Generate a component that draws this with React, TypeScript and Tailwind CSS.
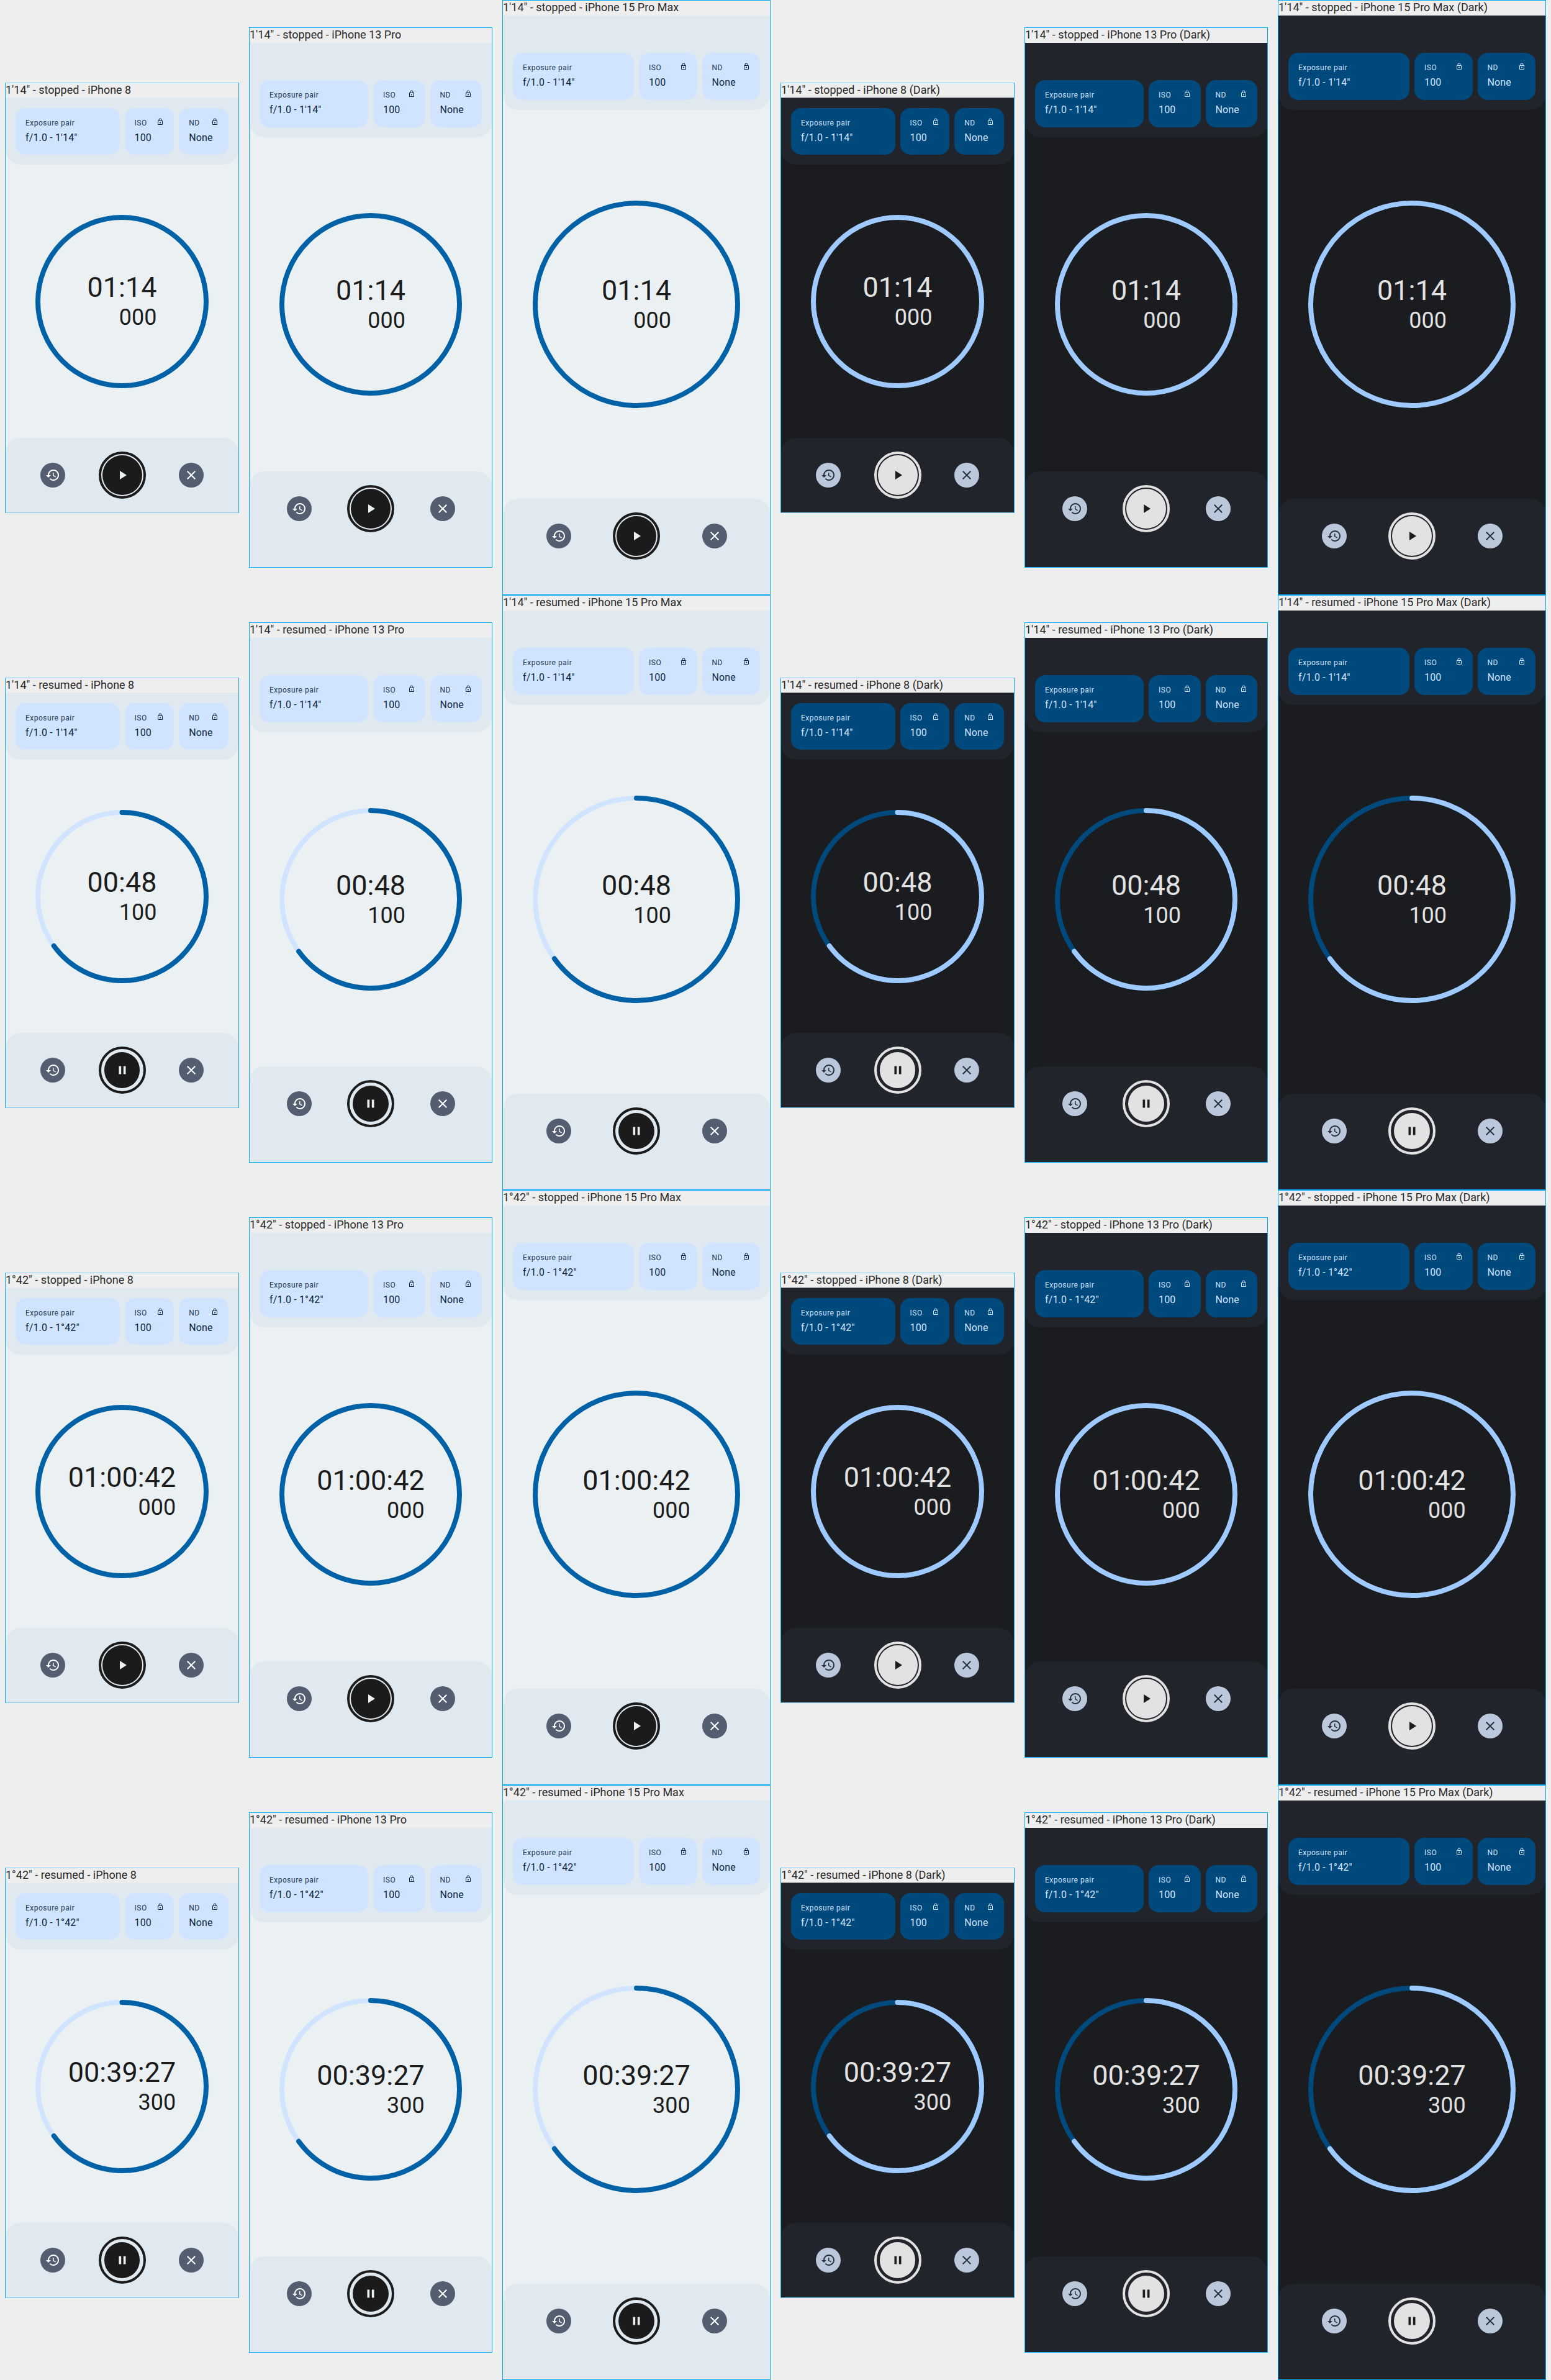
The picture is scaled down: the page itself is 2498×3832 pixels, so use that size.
import React from "react";

type Theme = {
  page: string;
  bar: string;
  card: string;
  cardLabel: string;
  cardText: string;
  clock: string;
  arc: string;
  track: string;
  side: string;
  ring: string;
  fill: string;
  seam: string;
};

const light: Theme = {
  page: "bg-[#ebf1f3]",
  bar: "bg-[#e0e8f0]",
  card: "bg-[#d1e4ff]",
  cardLabel: "text-[#1c3750]",
  cardText: "text-[#0b2740]",
  clock: "text-[#1c1c1d]",
  arc: "stroke-[#0061a6]",
  track: "stroke-[#d1e4ff]",
  side: "bg-[#535f70] text-white",
  ring: "border-[#1b1b1b]",
  fill: "bg-[#1b1b1b] text-[#ebf1f3]",
  seam: "border-[#e7ebef]",
};

const dark: Theme = {
  page: "bg-[#1b1c1f]",
  bar: "bg-[#21242b]",
  card: "bg-[#00497d]",
  cardLabel: "text-[#d1e4ff]",
  cardText: "text-[#d1e4ff]",
  clock: "text-[#e2e2e2]",
  arc: "stroke-[#9fcaff]",
  track: "stroke-[#00497d]",
  side: "bg-[#bbc7db] text-[#253140]",
  ring: "border-[#e2e2e2]",
  fill: "bg-[#e2e2e2] text-[#1b1c1f]",
  seam: "border-[#66686b]",
};

type Device = {
  name: string;
  width: number;
  frame: string;
  caption: string;
  screen: string;
  top: string;
  card: string;
  bottom: string;
};

const devices: Device[] = [
  {
    name: "iPhone 8",
    width: 375,
    frame: "mt-[133px] w-[377px] h-[693px] border-y-[#78cbf2]",
    caption: "h-[23px]",
    screen: "border-t",
    top: "pt-4",
    card: "h-[75px]",
    bottom: "h-[120px]",
  },
  {
    name: "iPhone 13 Pro",
    width: 390,
    frame: "mt-[44px] w-[392px] h-[870px]",
    caption: "h-6",
    screen: "",
    top: "pt-[60px]",
    card: "h-[76px]",
    bottom: "h-[154px] pb-[34px]",
  },
  {
    name: "iPhone 15 Pro Max",
    width: 430,
    frame: "w-[432px] h-[958px]",
    caption: "h-6",
    screen: "",
    top: "pt-[60px]",
    card: "h-[76px]",
    bottom: "h-[154px] pb-[34px]",
  },
];

type Scenario = {
  title: string;
  state: "stopped" | "resumed";
  time: string;
  millis: string;
};

const scenarios: Scenario[] = [
  { title: "1'14\"", state: "stopped", time: "01:14", millis: "000" },
  { title: "1'14\"", state: "resumed", time: "00:48", millis: "100" },
  { title: "1°42\"", state: "stopped", time: "01:00:42", millis: "000" },
  { title: "1°42\"", state: "resumed", time: "00:39:27", millis: "300" },
];

function LockIcon() {
  return (
    <svg viewBox="0 0 24 24" className="h-3 w-3" fill="currentColor">
      <path d="M18 8h-1V6c0-2.76-2.24-5-5-5S7 3.24 7 6v2H6c-1.1 0-2 .9-2 2v10c0 1.1.9 2 2 2h12c1.1 0 2-.9 2-2V10c0-1.1-.9-2-2-2zM9 6c0-1.66 1.34-3 3-3s3 1.34 3 3v2H9V6zm9 14H6V10h12v10zm-6-3c1.1 0 2-.9 2-2s-.9-2-2-2-2 .9-2 2 .9 2 2 2z" />
    </svg>
  );
}

function HistoryIcon() {
  return (
    <svg viewBox="0 0 24 24" className="h-6 w-6" fill="currentColor">
      <path d="M13 3c-4.97 0-9 4.03-9 9H1l3.89 3.89.07.14L9 12H6c0-3.87 3.13-7 7-7s7 3.13 7 7-3.13 7-7 7c-1.93 0-3.68-.79-4.94-2.06l-1.42 1.42C8.27 19.99 10.51 21 13 21c4.97 0 9-4.03 9-9s-4.03-9-9-9zm-1 5v5l4.28 2.54.72-1.21-3.5-2.08V8H12z" />
    </svg>
  );
}

function CloseIcon() {
  return (
    <svg viewBox="0 0 24 24" className="h-6 w-6" fill="currentColor">
      <path d="M19 6.41 17.59 5 12 10.59 6.41 5 5 6.41 10.59 12 5 17.59 6.41 19 12 13.41 17.59 19 19 17.59 13.41 12z" />
    </svg>
  );
}

function PlayIcon() {
  return (
    <svg viewBox="0 0 24 24" className="h-6 w-6" fill="currentColor">
      <path d="M8 5v14l11-7z" />
    </svg>
  );
}

function PauseIcon() {
  return (
    <svg viewBox="0 0 24 24" className="h-[22px] w-[22px]" fill="currentColor">
      <path d="M6 19h4V5H6v14zm8-14v14h4V5h-4z" />
    </svg>
  );
}

type ReadingProps = {
  label: string;
  value: string;
  theme: Theme;
  height: string;
  wide?: boolean;
  locked?: boolean;
};

function Reading({ label, value, theme, height, wide, locked }: ReadingProps) {
  return (
    <div className={`rounded-2xl px-4 pt-4 ${height} ${theme.card} ${theme.cardText} ${wide ? "col-span-2" : ""}`}>
      <div className="flex h-4 items-start justify-between">
        <span className={`text-[12px] leading-4 tracking-[0.5px] ${theme.cardLabel}`}>{label}</span>
        {locked && <LockIcon />}
      </div>
      <div className="mt-1 text-[16px] leading-6 tracking-[0.15px] whitespace-nowrap">{value}</div>
    </div>
  );
}

function Dial({ size, scenario, theme }: { size: number; scenario: Scenario; theme: Theme }) {
  const r = (size - 8) / 2;
  const c = size / 2;
  const length = 2 * Math.PI * r;
  const running = scenario.state === "resumed";
  return (
    <div className="grid place-items-center">
      <svg width={size} height={size} className="col-start-1 row-start-1 -rotate-90" fill="none" strokeWidth={8}>
        <circle cx={c} cy={c} r={r} className={running ? theme.track : theme.arc} />
        {running && (
          <circle
            cx={c}
            cy={c}
            r={r}
            className={theme.arc}
            strokeLinecap="round"
            strokeDasharray={`${length * 0.65} ${length}`}
          />
        )}
      </svg>
      <div className={`col-start-1 row-start-1 text-right ${theme.clock}`}>
        <div className="text-[45px] leading-[52px]">{scenario.time}</div>
        <div className="text-[36px] leading-[44px]">{scenario.millis}</div>
      </div>
    </div>
  );
}

function Preview({ device, scenario, theme }: { device: Device; scenario: Scenario; theme: Theme }) {
  const suffix = theme === dark ? " (Dark)" : "";
  return (
    <div className={`flex shrink-0 flex-col border border-[#03a9f4] ${device.frame}`}>
      <div className={`text-[18px] leading-[21px] whitespace-nowrap text-[#2a2a2a] ${device.caption}`}>
        {`${scenario.title} - ${scenario.state} - ${device.name}${suffix}`}
      </div>
      <div className={`flex grow flex-col ${theme.page} ${theme.seam} ${device.screen}`}>
        <div className={`grid grid-cols-4 gap-2 rounded-b-3xl px-4 pb-4 ${theme.bar} ${device.top}`}>
          <Reading label="Exposure pair" value={`f/1.0 - ${scenario.title}`} theme={theme} height={device.card} wide />
          <Reading label="ISO" value="100" theme={theme} height={device.card} locked />
          <Reading label="ND" value="None" theme={theme} height={device.card} locked />
        </div>
        <div className="flex grow items-center justify-center">
          <Dial size={device.width - 96} scenario={scenario} theme={theme} />
        </div>
        <div className={`flex items-center justify-evenly rounded-t-3xl ${theme.bar} ${device.bottom}`}>
          <div className={`-mr-1 ml-[-4px] flex h-10 w-10 items-center justify-center rounded-full ${theme.side}`}>
            <HistoryIcon />
          </div>
          <div className={`-mx-0.5 flex h-[76px] w-[76px] items-center justify-center rounded-full border-4 ${theme.ring}`}>
            <div
              className={`flex items-center justify-center rounded-full ${theme.fill} ${
                scenario.state === "stopped" ? "h-16 w-16" : "h-[57.6px] w-[57.6px]"
              }`}
            >
              {scenario.state === "stopped" ? <PlayIcon /> : <PauseIcon />}
            </div>
          </div>
          <div className={`-mr-1 ml-[-4px] flex h-10 w-10 items-center justify-center rounded-full ${theme.side}`}>
            <CloseIcon />
          </div>
        </div>
      </div>
    </div>
  );
}

export default function App() {
  return (
    <div className="h-[3832px] w-[2498px] overflow-hidden bg-[#eeeeee] font-['Roboto',sans-serif]">
      {scenarios.map((scenario, row) => (
        <div key={row} className="flex h-[958px] items-start gap-4 pl-2">
          {[light, dark].map((theme) =>
            devices.map((device) => (
              <Preview
                key={`${device.name}-${theme.page}`}
                device={device}
                scenario={scenario}
                theme={theme}
              />
            )),
          )}
        </div>
      ))}
    </div>
  );
}
